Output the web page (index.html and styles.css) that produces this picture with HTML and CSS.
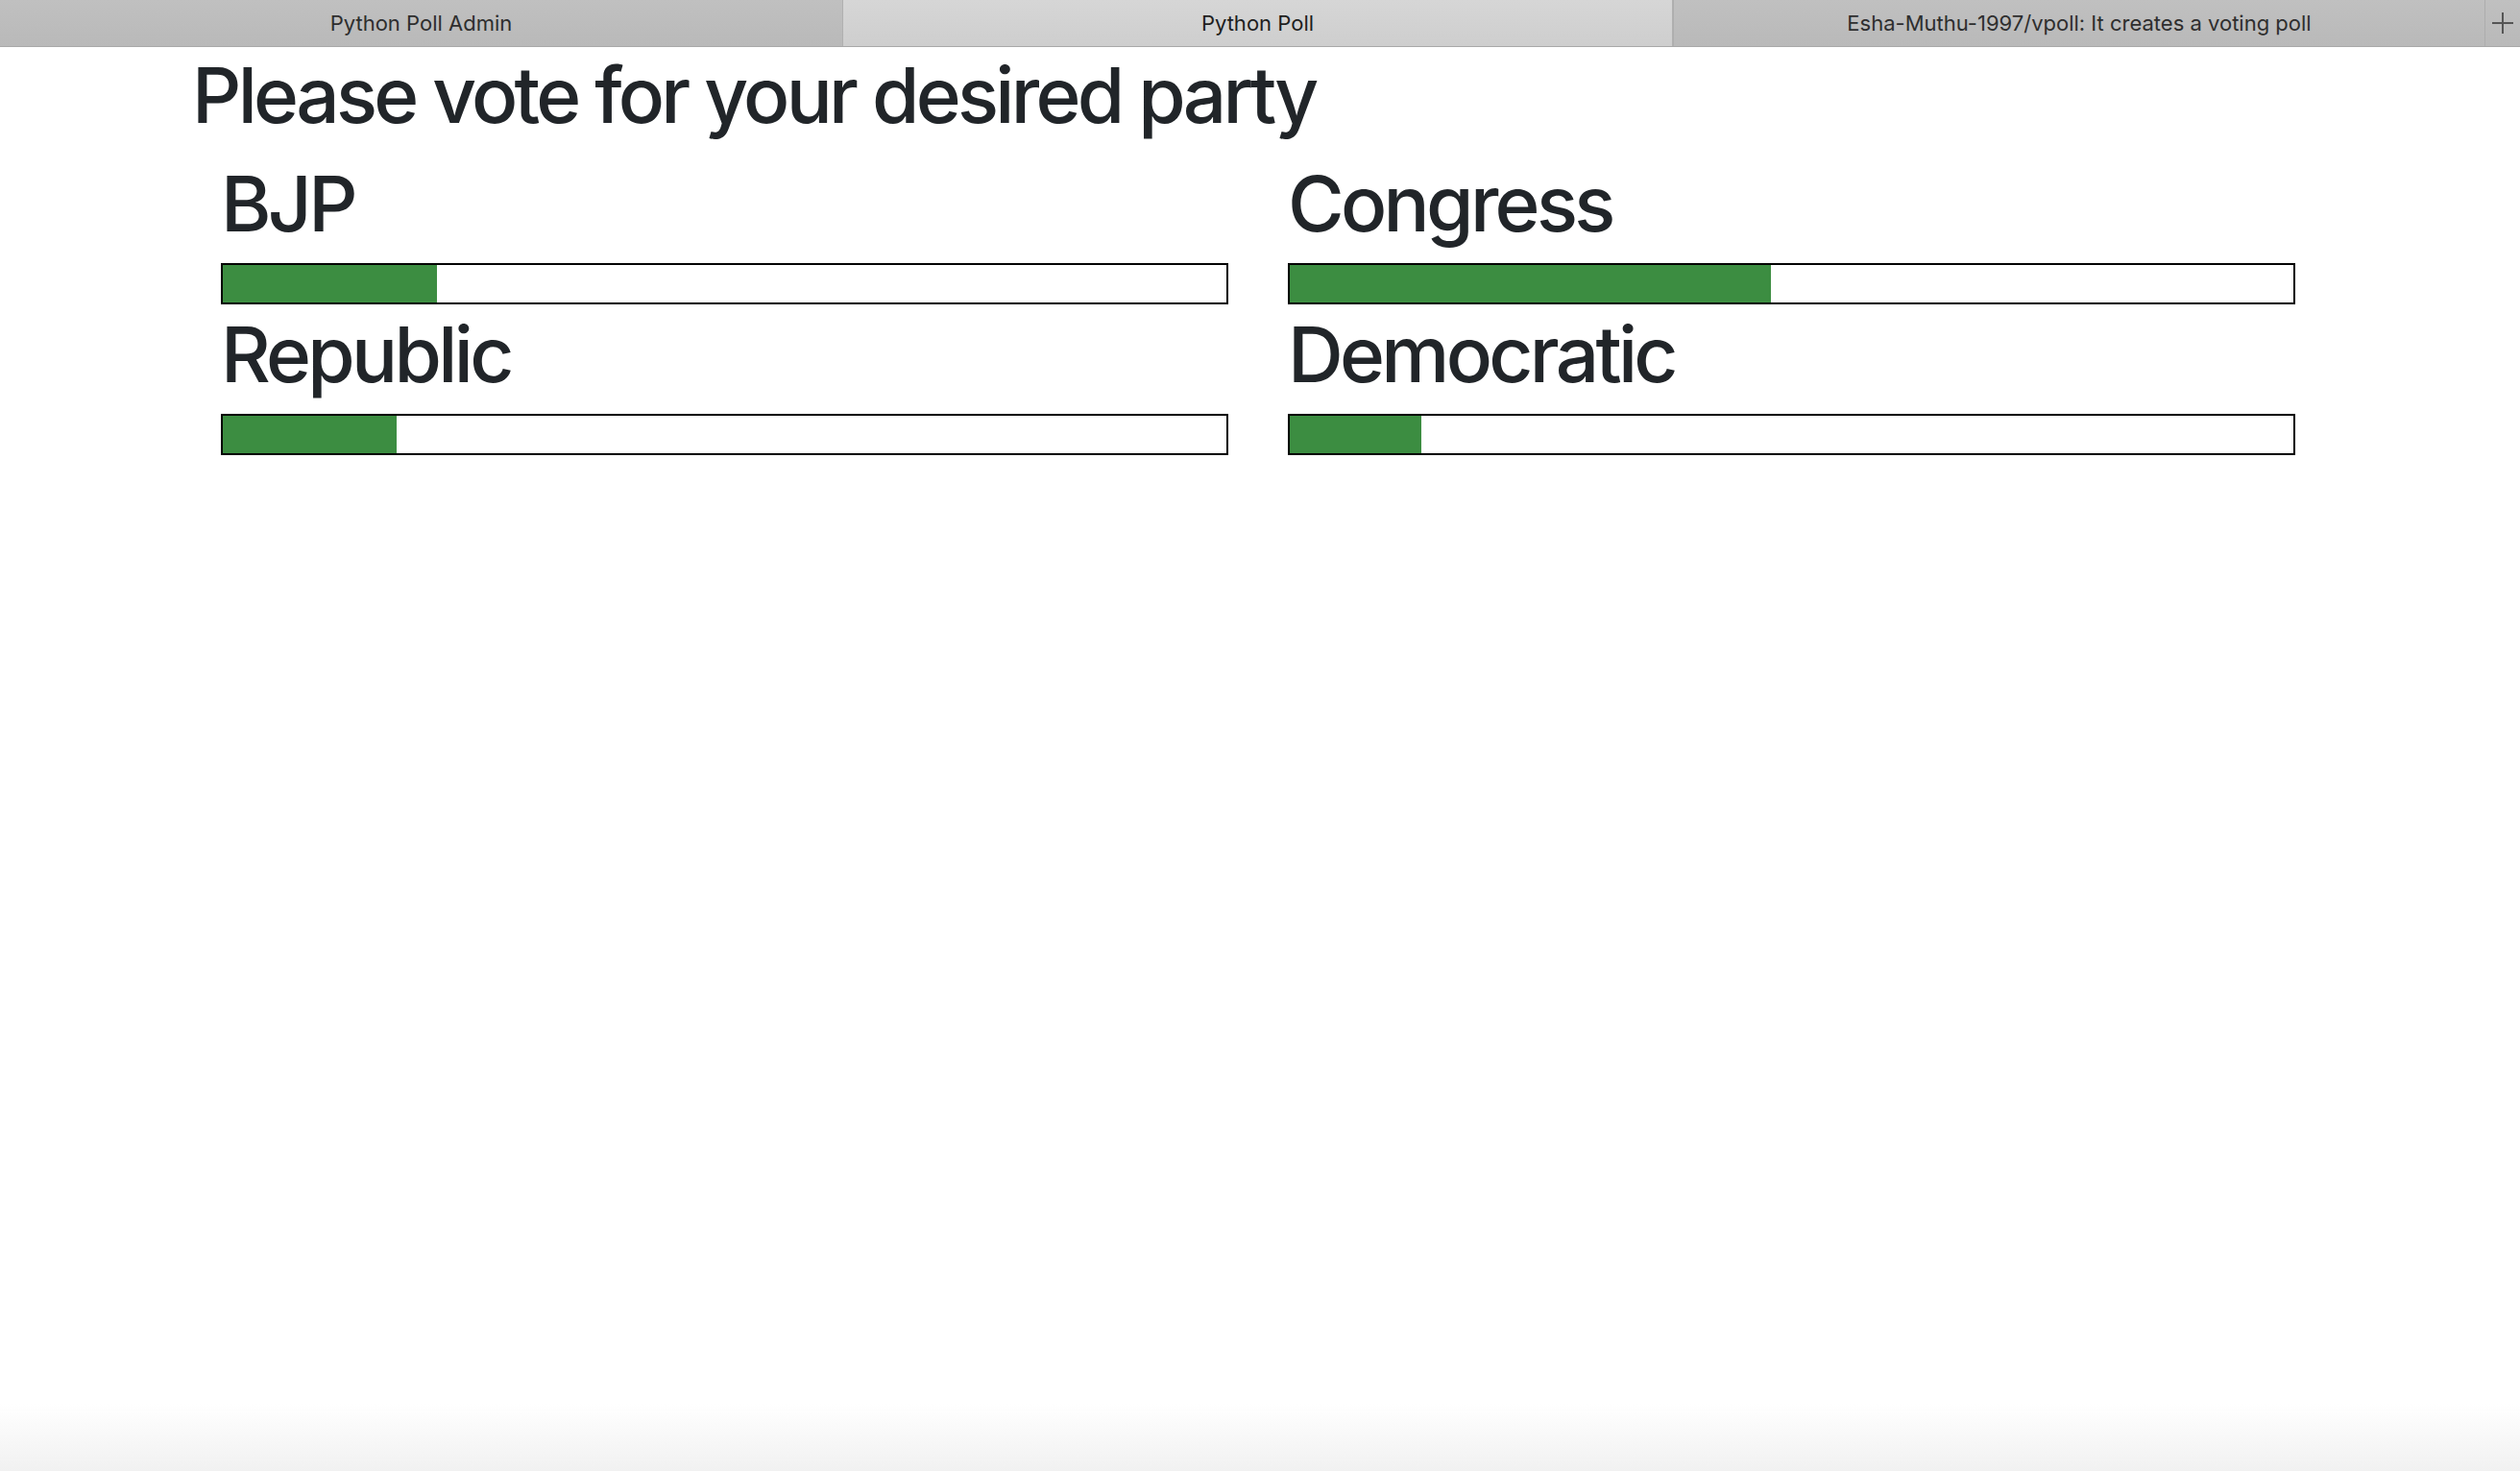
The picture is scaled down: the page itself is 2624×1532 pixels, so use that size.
FILE: index.html
```html
<!DOCTYPE html>
<html lang="en">
<head>
<meta charset="utf-8">
<title>Python Poll</title>
<link rel="stylesheet" href="styles.css">
</head>
<body>
  <div class="tabbar">
    <div class="tab tab-first">Python Poll Admin</div>
    <div class="tab tab-active">Python Poll</div>
    <div class="tab">Esha-Muthu-1997/vpoll: It creates a voting poll</div>
    <div class="tab-new">
      <svg width="22" height="22" viewBox="0 0 22 22"><path d="M11 0V22M0 11H22" stroke="#555" stroke-width="2" fill="none"/></svg>
    </div>
  </div>
  <main class="container">
    <h1 class="title">Please vote for your desired party</h1>
    <div class="parties">
      <div class="party">
        <h2 class="party-name">BJP</h2>
        <div class="bar"><div class="fill" style="width:21.3%"></div></div>
      </div>
      <div class="party">
        <h2 class="party-name">Congress</h2>
        <div class="bar"><div class="fill" style="width:47.9%"></div></div>
      </div>
      <div class="party">
        <h2 class="party-name">Republic</h2>
        <div class="bar"><div class="fill" style="width:17.3%"></div></div>
      </div>
      <div class="party">
        <h2 class="party-name">Democratic</h2>
        <div class="bar"><div class="fill" style="width:13.1%"></div></div>
      </div>
    </div>
  </main>
</body>
</html>
```

FILE: styles.css
```css
html {
  min-height: 100%;
  background: linear-gradient(to bottom, #ffffff calc(100% - 70px), #f1f1f1 100%);
}
body {
  margin: 0;
  min-height: 1532px;
  font-family: Inter, "Liberation Sans", sans-serif;
  color: #212529;
}
.tabbar {
  display: flex;
  height: 48px;
  border-bottom: 1px solid #a9a9a9;
  background: linear-gradient(to bottom, #c0c0c0, #b9b9b9);
}
.tab {
  flex: 0 0 845px;
  display: flex;
  align-items: center;
  justify-content: center;
  font-size: 22px;
  color: #2e2e2e;
  border-left: 1px solid #adadad;
  box-sizing: border-box;
}
.tab-first {
  flex-basis: 877px;
  border-left: none;
}
.tab-active {
  flex-basis: 865px;
  background: linear-gradient(to bottom, #d6d6d6, #cecece);
  color: #1e1e1e;
  border-left: 1px solid #b0b0b0;
  border-right: 1px solid #b0b0b0;
}
.tab-new {
  flex: 1;
  display: flex;
  align-items: center;
  justify-content: center;
  border-left: 1px solid #adadad;
}
.container {
  width: 2220px;
  margin-left: 200px;
}
.title {
  margin: 2px 0 17px;
  font-size: 80px;
  font-weight: 500;
  line-height: 96px;
  letter-spacing: -3.7px;
}
.parties {
  display: grid;
  grid-template-columns: 1049px 1049px;
  column-gap: 62px;
  margin-left: 30px;
}
.party-name {
  margin: 0 0 14px;
  font-size: 80px;
  font-weight: 500;
  line-height: 96px;
  letter-spacing: -3.7px;
}
.bar {
  height: 43px;
  box-sizing: border-box;
  border: 2px solid #000;
  background: #fff;
  margin-bottom: 4px;
}
.fill {
  height: 100%;
  background: #3c8d41;
}
```
